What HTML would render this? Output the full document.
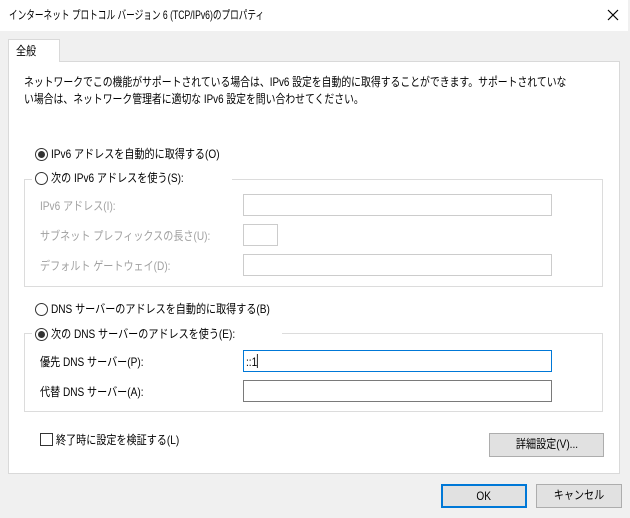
<!DOCTYPE html>
<html><head><meta charset="utf-8"><style>
*{margin:0;padding:0;box-sizing:border-box}
body{width:630px;height:518px;background:#f0f0f0;position:relative;overflow:hidden;font-family:"Liberation Sans","Noto Sans CJK JP",sans-serif;font-size:12px;color:#000}
.a{position:absolute;white-space:nowrap;line-height:16px;transform:scaleX(.84);transform-origin:left}
.title{position:absolute;left:0;top:0;width:628px;height:31px;background:#fff}
.panel{position:absolute;left:8px;top:61px;width:612px;height:413px;background:#fff;border:1px solid #d9d9d9}
.tab{position:absolute;left:8px;top:39px;width:52px;height:23px;background:#fff;border:1px solid #d9d9d9;border-bottom:none}
.grp{position:absolute;border:1px solid #dcdcdc}
.in{position:absolute;background:#fff;border:1px solid #7a7a7a;height:22px}
.dis{border-color:#cccccc}
.g{color:#a0a0a0}
.r{position:absolute;width:13px;height:13px;border:1px solid #333;border-radius:50%;background:#fff}
.r.on::after{content:"";position:absolute;left:2px;top:2px;width:7px;height:7px;border-radius:50%;background:#333}
.btn{position:absolute;background:#e1e1e1;border:1px solid #adadad;text-align:center;line-height:21px}
.btn span{display:inline-block;transform:scaleX(.84)}
</style></head><body>
<div class="title"></div>
<div class="a" style="left:9px;top:7px;transform:scaleX(.72)">インターネット プロトコル バージョン 6 (TCP/IPv6)のプロパティ</div>
<svg style="position:absolute;left:607px;top:9px" width="12" height="12"><path d="M1 1L11 11M11 1L1 11" stroke="#000" stroke-width="1.2"/></svg>
<div class="panel"></div>
<div class="tab"></div>
<div class="a" style="left:16px;top:43px">全般</div>
<div class="a" style="left:24px;top:74px;transform:scaleX(.82)">ネットワークでこの機能がサポートされている場合は、IPv6 設定を自動的に取得することができます。サポートされていな</div>
<div class="a" style="left:24px;top:91px;transform:scaleX(.82)">い場合は、ネットワーク管理者に適切な IPv6 設定を問い合わせてください。</div>

<div class="r on" style="left:35px;top:148px"></div>
<div class="a" style="left:51px;top:146px">IPv6 アドレスを自動的に取得する(O)</div>

<div class="grp" style="left:24px;top:179px;width:579px;height:108px"></div>
<div style="position:absolute;left:32px;top:170px;width:200px;height:18px;background:#fff"></div>
<div class="r" style="left:35px;top:172px"></div>
<div class="a" style="left:51px;top:170px">次の IPv6 アドレスを使う(S):</div>
<div class="a g" style="left:40px;top:198px">IPv6 アドレス(I):</div>
<div class="in dis" style="left:243px;top:194px;width:309px"></div>
<div class="a g" style="left:40px;top:228px">サブネット プレフィックスの長さ(U):</div>
<div class="in dis" style="left:243px;top:224px;width:35px"></div>
<div class="a g" style="left:40px;top:258px">デフォルト ゲートウェイ(D):</div>
<div class="in dis" style="left:243px;top:254px;width:309px"></div>

<div class="r" style="left:35px;top:303px"></div>
<div class="a" style="left:51px;top:301px">DNS サーバーのアドレスを自動的に取得する(B)</div>

<div class="grp" style="left:24px;top:333px;width:579px;height:79px"></div>
<div style="position:absolute;left:32px;top:324px;width:250px;height:18px;background:#fff"></div>
<div class="r on" style="left:35px;top:328px"></div>
<div class="a" style="left:51px;top:326px">次の DNS サーバーのアドレスを使う(E):</div>
<div class="a" style="left:40px;top:354px">優先 DNS サーバー(P):</div>
<div class="in" style="left:243px;top:350px;width:309px;border-color:#0078d7"></div>
<div class="a" style="left:246px;top:354px">::1<span style="display:inline-block;width:1px;height:14px;background:#000;vertical-align:-2px"></span></div>
<div class="a" style="left:40px;top:384px">代替 DNS サーバー(A):</div>
<div class="in" style="left:243px;top:380px;width:309px"></div>

<div style="position:absolute;left:40px;top:433px;width:13px;height:13px;border:1px solid #333;background:#fff"></div>
<div class="a" style="left:56px;top:432px">終了時に設定を検証する(L)</div>
<div class="btn" style="left:489px;top:433px;width:115px;height:24px"><span>詳細設定(V)...</span></div>

<div class="btn" style="left:441px;top:484px;width:86px;height:24px;border:2px solid #0078d7;line-height:20px"><span>OK</span></div>
<div class="btn" style="left:536px;top:484px;width:86px;height:24px"><span>キャンセル</span></div>
</body></html>
